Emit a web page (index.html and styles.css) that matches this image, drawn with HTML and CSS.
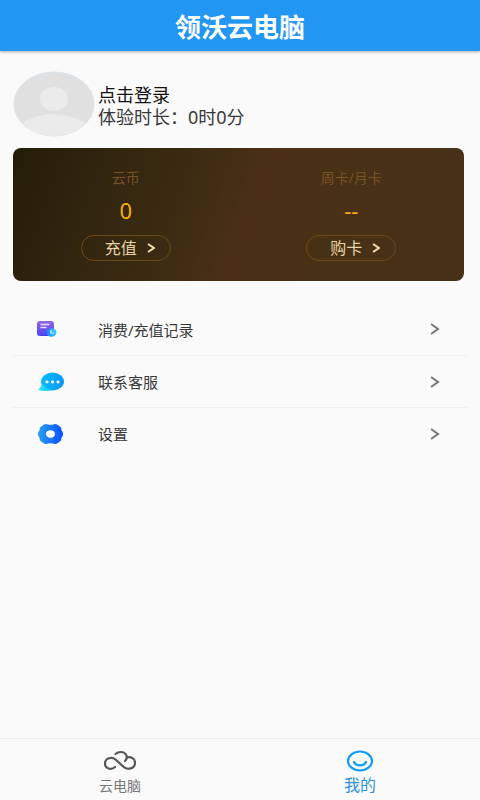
FILE: index.html
```html
<!DOCTYPE html>
<html lang="zh-CN">
<head>
<meta charset="utf-8">
<meta name="viewport" content="width=device-width, initial-scale=1">
<title>领沃云电脑</title>
<link rel="stylesheet" href="styles.css">
</head>
<body>
<header class="topbar"><h1>领沃云电脑</h1></header>
<main class="content">
  <a class="profile" href="#login">
    <svg class="avatar" viewBox="0 0 82 66" aria-hidden="true">
      <defs><clipPath id="face"><ellipse cx="41" cy="33" rx="40" ry="32"/></clipPath></defs>
      <ellipse cx="41" cy="33" rx="40" ry="32" fill="#e0e0e0" stroke="#d9e4ec"/>
      <g clip-path="url(#face)" fill="#ebebeb">
        <ellipse cx="41" cy="28" rx="14" ry="12"/>
        <ellipse cx="41" cy="68" rx="40" ry="25"/>
      </g>
    </svg>
    <span class="profile-text">
      <span class="login">点击登录</span>
      <span class="time">体验时长：0时0分</span>
    </span>
  </a>
  <section class="wallet">
    <div class="asset">
      <span class="label">云币</span>
      <span class="value">0</span>
      <button class="pill" type="button">充值<svg viewBox="0 0 8 10" aria-hidden="true"><path d="M1 1l6 4-6 4"/></svg></button>
    </div>
    <div class="asset">
      <span class="label">周卡/月卡</span>
      <span class="value">--</span>
      <button class="pill" type="button">购卡<svg viewBox="0 0 8 10" aria-hidden="true"><path d="M1 1l6 4-6 4"/></svg></button>
    </div>
  </section>
  <nav class="menu">
    <a href="#records">
      <svg class="icon" viewBox="0 0 30 22" aria-hidden="true">
        <defs>
          <linearGradient id="note" x2="0" y2="1"><stop stop-color="#9168df"/><stop offset="1" stop-color="#4b40ee"/></linearGradient>
          <linearGradient id="clock" x2="1"><stop stop-color="#247dff"/><stop offset="1" stop-color="#35d4ff"/></linearGradient>
        </defs>
        <rect x="2" y="3" width="17" height="15" rx="3" fill="url(#note)"/>
        <path d="M5.500 6.500h9M5.500 9.500h6" stroke="#e9ddff" stroke-width="1.4"/>
        <ellipse cx="16.500" cy="14.500" rx="5" ry="4.200" fill="url(#clock)"/>
        <path d="M16 12v3h3" fill="none" stroke="#dcf8ff" stroke-width="1.200"/>
      </svg>
      <span>消费/充值记录</span>
      <svg class="arrow" viewBox="0 0 10 12" aria-hidden="true"><path d="M1 1l7 5-7 5"/></svg>
    </a>
    <a href="#service">
      <svg class="icon" viewBox="0 0 30 22" aria-hidden="true">
        <defs>
          <linearGradient id="bubble" x2="1"><stop stop-color="#08bdf8"/><stop offset="1" stop-color="#0796fa"/></linearGradient>
          <linearGradient id="tail" x2="1"><stop stop-color="#2ee5f6"/><stop offset="1" stop-color="#0ac4f6"/></linearGradient>
        </defs>
        <ellipse cx="17.500" cy="10.500" rx="11.500" ry="9" fill="url(#bubble)"/>
        <path d="M7 13q-1 3-4 6 8 2 15 0-7-1-11-6z" fill="url(#tail)"/>
        <g fill="#fff"><ellipse cx="12" cy="11" rx="1.600" ry="1.400"/><ellipse cx="17.500" cy="11" rx="1.600" ry="1.400"/><ellipse cx="23" cy="11" rx="1.600" ry="1.400"/></g>
      </svg>
      <span>联系客服</span>
      <svg class="arrow" viewBox="0 0 10 12" aria-hidden="true"><path d="M1 1l7 5-7 5"/></svg>
    </a>
    <a href="#settings">
      <svg class="icon" viewBox="0 0 30 22" aria-hidden="true">
        <defs><linearGradient id="gear" x2="1"><stop stop-color="#2aa1f2"/><stop offset="1" stop-color="#0a4cff"/></linearGradient></defs>
        <path d="M9 1.500Q10.500.5 12 1.200q3.500 1.200 7 0 1.500-.7 3 .3l3.500 2.500q1 .8.8 2.500 0 1 1.200 2.200 1.500 2.300 0 4.600-1.200 1.200-1.200 2.200.2 1.700-.8 2.500L22 20.500q-1.500 1-3 .3-3.500-1.200-7 0-1.500.7-3-.3L5.500 18q-1-.8-.8-2.500 0-1-1.200-2.200-1.500-2.300 0-4.600 1.200-1.200 1.200-2.200-.2-1.700.8-2.500z" fill="url(#gear)"/>
        <ellipse cx="15.500" cy="11" rx="4.500" ry="3.800" fill="#fff"/>
      </svg>
      <span>设置</span>
      <svg class="arrow" viewBox="0 0 10 12" aria-hidden="true"><path d="M1 1l7 5-7 5"/></svg>
    </a>
  </nav>
</main>
<nav class="tabs">
  <a href="#cloud">
    <svg viewBox="0 0 34 24" aria-hidden="true" fill="none" stroke="#565656" stroke-width="2.200" stroke-linecap="round">
      <path d="M12 18C8 21.500 2 19.500 2 14.500S8.500 7 12.500 10.500L20.500 17.800c4 3.700 11.500 1.700 11.500-3.800 0-4.500-4-6.500-8-5.500"/>
      <path d="M12.500 5C16 2 21 2.500 23 5.500c1.500 2.500 1 4.500-1 6.500"/>
    </svg>
    <span>云电脑</span>
  </a>
  <a class="active" href="#mine" aria-current="page">
    <svg viewBox="0 0 34 24" aria-hidden="true" fill="none" stroke="#109df5" stroke-width="2.200" stroke-linecap="round">
      <ellipse cx="17" cy="12" rx="12" ry="9.500"/><path d="M11 13c2 4.500 10 4.500 12 0"/>
    </svg>
    <span>我的</span>
  </a>
</nav>
</body>
</html>
```
FILE: styles.css
```css
* { box-sizing: border-box; }
body {
  margin: 0;
  min-height: 100vh;
  display: flex;
  flex-direction: column;
  background: #fafafa;
  color: #383838;
  font-family: "Noto Sans", "Noto Sans CJK SC", sans-serif;
}
a { color: inherit; text-decoration: none; }
.topbar {
  padding: 10px 16px 6px;
  background: #2196f3;
  color: #fff;
  text-align: center;
  box-shadow: 0 1px 3px rgba(0, 0, 0, .3);
}
h1 { margin: 0; font-size: 26px; line-height: 35px; font-weight: 700; }
.content { flex: 1; padding: 20px 13px; }
.profile { display: flex; align-items: center; gap: 3px; }
.avatar { width: 82px; height: 66px; flex: none; }
.profile-text { display: flex; flex-direction: column; padding-top: 3px; font-size: 18px; line-height: 22px; }
.login { color: #111; }
.wallet {
  display: flex;
  margin: 11px 3px 0 0;
  padding: 20px 0;
  border-radius: 8px;
  background: linear-gradient(110deg, #251c08 0%, #33260f 22%, #3e2c13 40%, #4a2f15 52%, #483116 75%, #483217 100%);
}
.asset { flex: 1; display: flex; flex-direction: column; align-items: center; }
.label { font-size: 14px; line-height: 20px; color: #775327; }
.value { margin: 7px 0 10px; font-size: 22px; line-height: 30px; color: #f8b005; }
.pill {
  display: flex;
  align-items: center;
  justify-content: center;
  gap: 10px;
  width: 90px;
  height: 26px;
  padding: 0 0 0 8px;
  border: 1px solid #704817;
  border-radius: 13px;
  background: transparent;
  color: #e6d3a7;
  font: inherit;
  font-size: 16px;
  line-height: 24px;
}
.pill svg { width: 8px; height: 10px; fill: none; stroke: #f3e1b6; stroke-width: 2; }
.menu { margin-top: 22px; }
.menu a {
  display: flex;
  align-items: center;
  height: 52px;
  padding: 0 27px 0 22px;
  font-size: 15px;
}
.menu a + a { border-top: 1px solid #f0f0f0; }
.menu span { flex: 1; }
.icon { width: 30px; height: 22px; margin-right: 33px; }
.arrow { width: 10px; height: 12px; fill: none; stroke: #777; stroke-width: 2; }
.tabs {
  display: flex;
  height: 62px;
  padding-top: 10px;
  border-top: 1px solid #eee;
  color: #777;
}
.tabs a { flex: 1; display: flex; flex-direction: column; align-items: center; font-size: 14px; line-height: 25px; }
.tabs svg { width: 34px; height: 24px; }
.tabs .active { color: #2c94df; font-size: 16px; }
```
